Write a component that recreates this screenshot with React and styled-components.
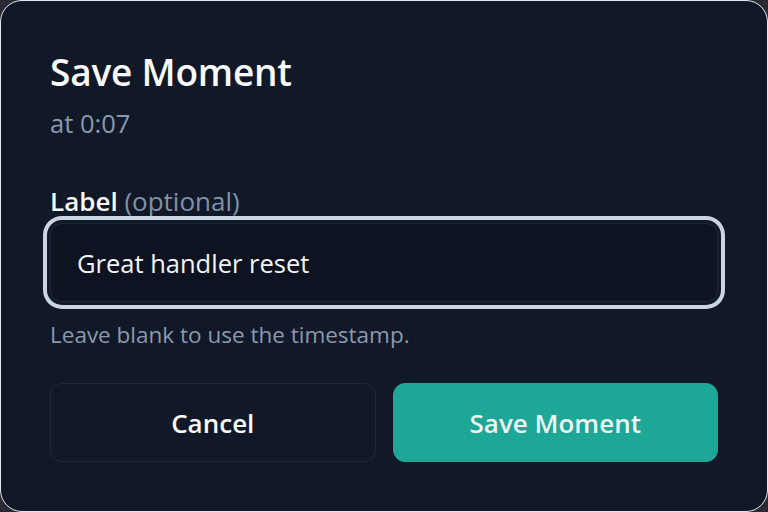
import React from "react";
import styled, { createGlobalStyle } from "styled-components";

const Global = createGlobalStyle`
  html, body { margin: 0; padding: 0; background: #2a2a33; }
  body { font-family: "Open Sans", "Noto Sans", sans-serif; }
  * { box-sizing: border-box; }
`;

const Dialog = styled.div`
  width: 768px;
  height: 512px;
  background: #111827;
  border: 1px solid #e2e8f0;
  border-radius: 22px;
  padding: 49px 49px 0 49px;
  display: flex;
  flex-direction: column;
`;

const Title = styled.h2`
  margin: 0;
  font-size: 37px;
  line-height: 44px;
  font-weight: 600;
  color: #f8fafc;
  letter-spacing: -0.2px;
`;

const Subtitle = styled.p`
  margin: 13px 0 0;
  font-size: 25.5px;
  line-height: 32px;
  color: #8b99ae;
`;

const Label = styled.label`
  margin-top: 46px;
  font-size: 26px;
  line-height: 32px;
  font-weight: 600;
  color: #f8fafc;
`;

const Muted = styled.span`
  font-weight: 400;
  color: #8191a8;
`;

const Field = styled.input`
  margin-top: 6px;
  width: 100%;
  height: 79px;
  padding: 0 26px;
  background: #0d1321;
  border: 1.5px solid #1e293b;
  border-radius: 12px;
  box-shadow: 0 0 0 3px #111827, 0 0 0 7px #cbd5e1;
  color: #f1f5f9;
  font-family: inherit;
  font-size: 25.5px;
  outline: none;
`;

const Help = styled.p`
  margin: 19px 0 0;
  font-size: 22.5px;
  line-height: 28px;
  color: #8b99ae;
`;

const Actions = styled.div`
  margin-top: 34px;
  display: flex;
  gap: 17px;
`;

const Button = styled.button`
  flex: 1;
  height: 79px;
  border-radius: 12px;
  font-family: inherit;
  font-size: 26px;
  font-weight: 600;
  cursor: pointer;
  border: 1.5px solid ${(p) => (p.$primary ? "#1ca797" : "#1f2937")};
  background: ${(p) => (p.$primary ? "#1ca797" : "transparent")};
  color: ${(p) => (p.$primary ? "#ecf6f4" : "#f8fafc")};
`;

export default function App() {
  return (
    <>
      <Global />
      <Dialog>
        <Title>Save Moment</Title>
        <Subtitle>at 0:07</Subtitle>
        <Label htmlFor="label">
          Label <Muted>(optional)</Muted>
        </Label>
        <Field id="label" defaultValue="Great handler reset" />
        <Help>Leave blank to use the timestamp.</Help>
        <Actions>
          <Button>Cancel</Button>
          <Button $primary>Save Moment</Button>
        </Actions>
      </Dialog>
    </>
  );
}
